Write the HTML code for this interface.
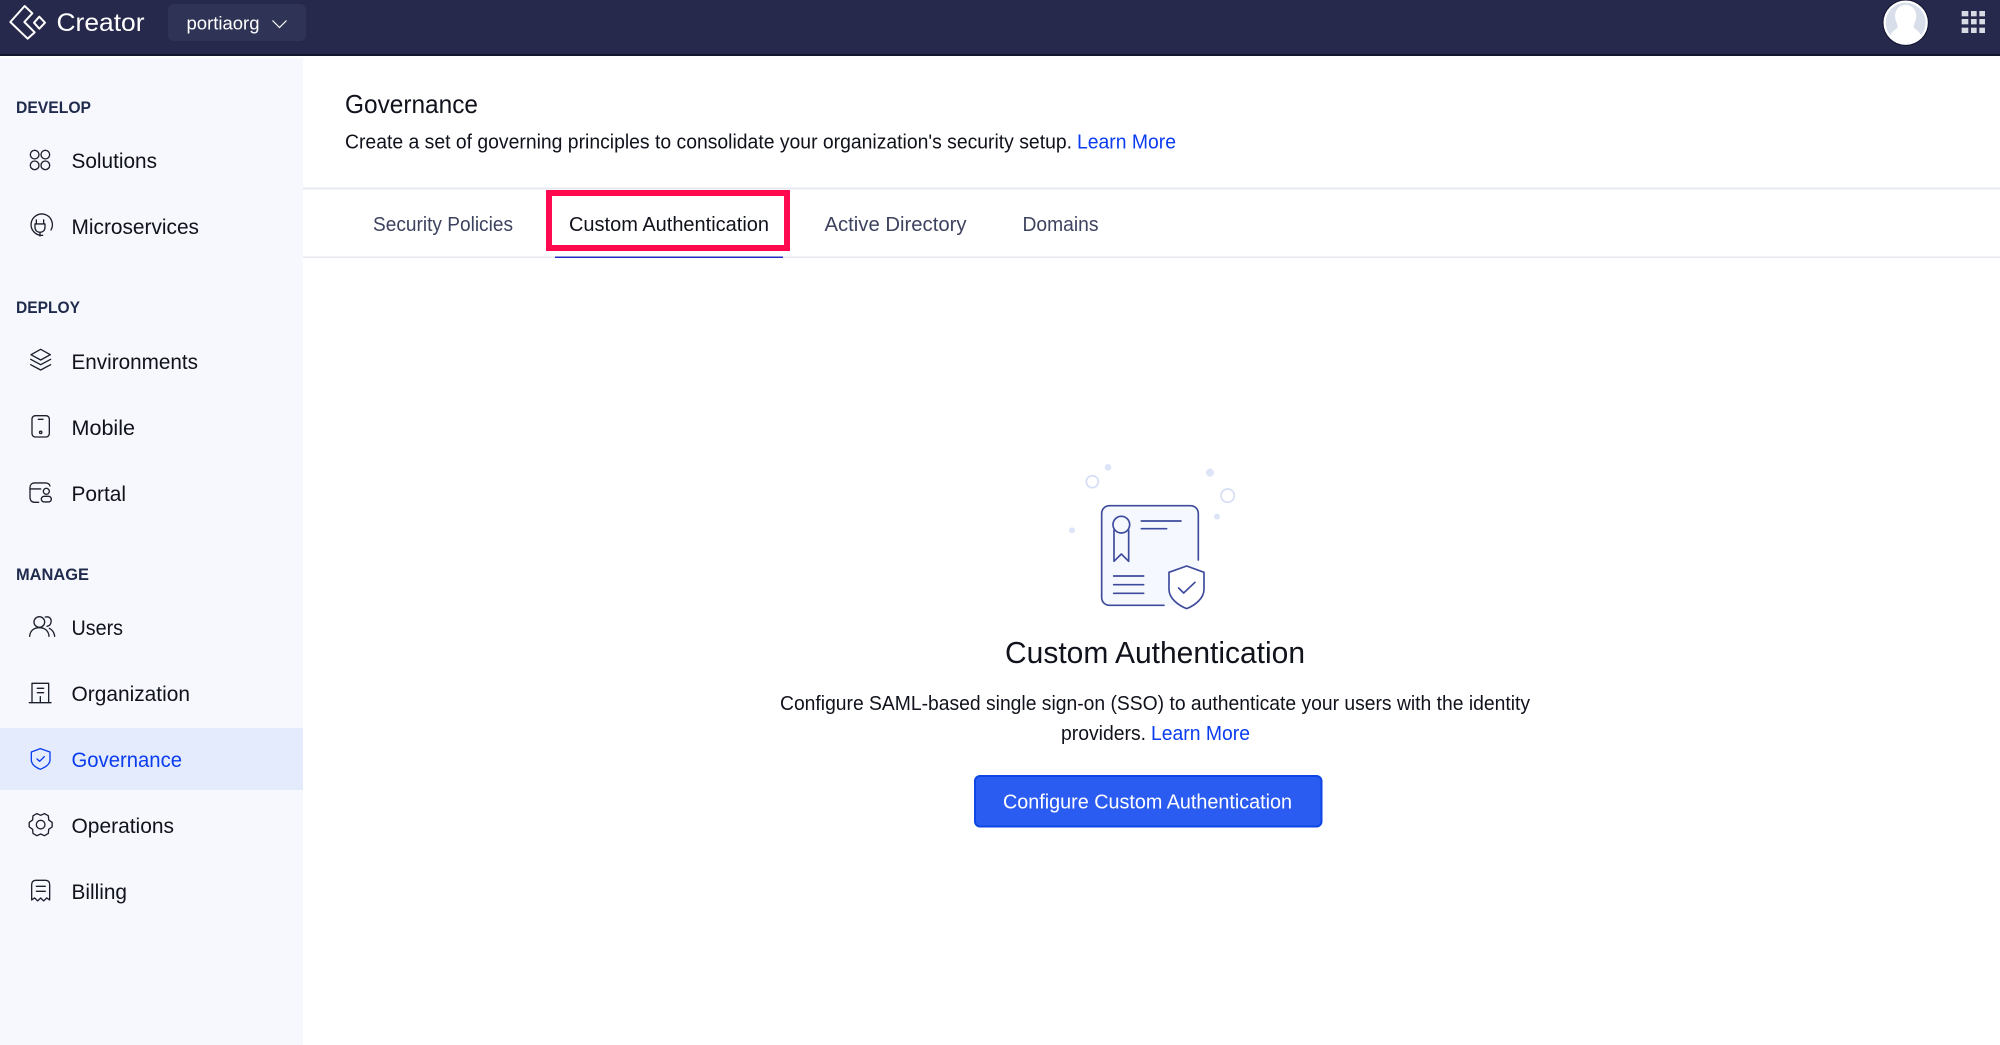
<!DOCTYPE html>
<html><head><meta charset="utf-8"><title>Governance</title>
<style>
html,body{margin:0;padding:0;background:#fff;width:2000px;height:1045px;overflow:hidden}
svg{display:block}
text{font-family:"Liberation Sans",sans-serif;fill:#10121c}
.n{font-size:21px}
.h{font-size:17px;fill:#1f2a4d;font-weight:bold}
.t{font-size:20px;fill:#3d425f}
.d{font-size:20px}
.l{fill:#0a3cf0}
.i{fill:none;stroke:#1c1f2c;stroke-width:4;stroke-linecap:round;stroke-linejoin:round}
</style></head><body>
<svg width="2000" height="1045" viewBox="0 0 2000 1045" xmlns="http://www.w3.org/2000/svg">
<rect x="0" y="0" width="2000" height="55" fill="#27294c"/>
<rect x="0" y="54" width="2000" height="2" fill="#14152e"/>
<rect x="0" y="58" width="303" height="987" fill="#f6f8fd"/>
<rect x="0" y="728" width="303" height="62" fill="#e4ebfc"/>
<rect x="303" y="187.500" width="1697" height="2" fill="#e6e9f2"/>
<rect x="303" y="256.500" width="1697" height="1.500" fill="#e6e9f2"/>

<!-- logo -->
<g transform="scale(.3333)" fill="none" stroke="#fff" stroke-width="6" stroke-linejoin="round" stroke-linecap="round">
<path d="M74 18 L31 66 L83 116 L104 97 L73 66 L97 40 Z"/>
<path d="M118 50 L135 68 L118 86 L102 68 Z"/>
</g>
<text x="56.500" y="31" font-size="25" style="fill:#fff" textLength="88" lengthAdjust="spacingAndGlyphs">Creator</text>
<rect x="168" y="4" width="138" height="37" rx="6" fill="#2f3356"/>
<text x="186.500" y="29.500" font-size="18" style="fill:#fff" textLength="73" lengthAdjust="spacingAndGlyphs">portiaorg</text>
<path d="M272.500 20.500 L279.500 27.500 L286.500 20.500" fill="none" stroke="#fff" stroke-width="1.200"/>

<!-- avatar -->
<g transform="translate(1860,0) scale(.3333)">
<circle cx="137" cy="68" r="68" fill="#fff" stroke="#111230" stroke-width="3"/>
<circle cx="137" cy="68" r="60" fill="#d9dfea"/>
<path d="M91 106 C96 94 104 91 112 84 C116 78 108 68 106 56 C102 30 118 15 137 15 C156 15 172 30 168 56 C166 68 158 78 162 84 C170 91 178 94 183 106 A60 60 0 0 1 91 106Z" fill="#fff"/>
<g fill="#d8dbe3">
<rect x="305" y="33" width="20" height="16"/><rect x="333" y="33" width="17" height="16"/><rect x="358" y="33" width="17" height="16"/>
<rect x="305" y="57" width="20" height="16"/><rect x="333" y="57" width="17" height="16"/><rect x="358" y="57" width="17" height="16"/>
<rect x="305" y="83" width="20" height="16"/><rect x="333" y="83" width="17" height="16"/><rect x="358" y="83" width="17" height="16"/>
</g></g>

<!-- sidebar text -->
<text class="h" x="16" y="113" textLength="75" lengthAdjust="spacingAndGlyphs">DEVELOP</text>
<text class="n" x="71.500" y="168" textLength="85.500" lengthAdjust="spacingAndGlyphs">Solutions</text>
<text class="n" x="71.500" y="234" textLength="127.500" lengthAdjust="spacingAndGlyphs">Microservices</text>
<text class="h" x="16" y="313" textLength="64" lengthAdjust="spacingAndGlyphs">DEPLOY</text>
<text class="n" x="71.500" y="369" textLength="126.500" lengthAdjust="spacingAndGlyphs">Environments</text>
<text class="n" x="71.500" y="435" textLength="63.500" lengthAdjust="spacingAndGlyphs">Mobile</text>
<text class="n" x="71.500" y="501" textLength="54.500" lengthAdjust="spacingAndGlyphs">Portal</text>
<text class="h" x="16" y="580" textLength="73" lengthAdjust="spacingAndGlyphs">MANAGE</text>
<text class="n" x="71.500" y="635" textLength="51.500" lengthAdjust="spacingAndGlyphs">Users</text>
<text class="n" x="71.500" y="701" textLength="118.500" lengthAdjust="spacingAndGlyphs">Organization</text>
<text class="n l" x="71.500" y="767" textLength="110.500" lengthAdjust="spacingAndGlyphs">Governance</text>
<text class="n" x="71.500" y="833" textLength="102.500" lengthAdjust="spacingAndGlyphs">Operations</text>
<text class="n" x="71.500" y="899" textLength="55.500" lengthAdjust="spacingAndGlyphs">Billing</text>

<!-- sidebar icons: zoom coordinates -->
<g transform="scale(.3333)" class="i">
<circle cx="104" cy="464" r="13"/><circle cx="136" cy="464" r="13"/><circle cx="104" cy="496" r="13"/><circle cx="136" cy="496" r="13"/>
<path d="M128 706 A32 32 0 1 1 153 690"/><path d="M109 660 V672 M131 660 V672 M105 672 H135 V682 C135 692 128 697 120 697 C112 697 105 692 105 682 Z M120 697 V708"/>
</g>
<g transform="translate(0,260) scale(.3333)" class="i">
<path d="M122 268 L151 284 L122 300 L93 284 Z"/><path d="M92 298 L122 314 L152 298"/><path d="M92 314 L122 330 L152 314"/>
<rect x="96" y="467" width="52" height="64" rx="10"/><path d="M115 478 H129"/><circle cx="122" cy="517" r="3.500"/>
<path d="M150 678 C148 671 142 669 136 669 H104 C95 669 90 675 90 683 V712 C90 721 95 727 104 727 H116"/><path d="M90 687 H122"/><circle cx="139" cy="694" r="9"/><rect x="124" y="709" width="30" height="17" rx="8.500"/>
</g>
<g transform="translate(0,560) scale(.3333)" class="i">
<circle cx="118" cy="186" r="16"/><path d="M89 229 C90 212 102 203 118 203 C134 203 146 212 147 229"/><path d="M136 171 C150 168 155 178 153 187 C152 194 147 198 141 199"/><path d="M148 205 C158 210 163 218 164 229"/>
<path d="M96 427 V370 H146 V427"/><path d="M88 428 H153"/><path d="M112 385 H131 M112 398 H131 M121 410 V427"/>
<path style="stroke:#0a3cf0" d="M121 566 L150 576 V600 C150 612 136 622 121 628 C106 622 94 612 94 600 V576 Z"/><path style="stroke:#0a3cf0" d="M111 597 L119 604 L133 590"/>
<path d="M133.400 760.900 L145 767.600 L146.200 780 L156.400 787.300 L156.400 800.700 L146.200 808 L145 820.400 L133.400 827.100 L122 822 L110.600 827.100 L99 820.400 L97.800 808 L87.600 800.700 L87.600 787.300 L97.800 780 L99 767.600 L110.600 760.900 L122 766 Z"/><circle cx="122" cy="794" r="13"/>
<path d="M95 975 C95 966 100 961 108 961 H137 C145 961 149 966 149 975 V1020 L140 1014 L131 1023 L122 1014 L113 1023 L104 1014 L95 1020 Z"/><path d="M109 979 H136 M109 994 H136"/>
</g>

<!-- page header -->
<text x="345" y="113" font-size="26" textLength="133" lengthAdjust="spacingAndGlyphs">Governance</text>
<text class="d" x="345" y="148.500" textLength="727" lengthAdjust="spacingAndGlyphs">Create a set of governing principles to consolidate your organization's security setup.</text>
<text class="d l" x="1077" y="148.500" textLength="99" lengthAdjust="spacingAndGlyphs">Learn More</text>

<!-- tabs -->
<text class="t" x="373" y="231" textLength="140" lengthAdjust="spacingAndGlyphs">Security Policies</text>
<text class="d" x="569" y="231" textLength="200" lengthAdjust="spacingAndGlyphs">Custom Authentication</text>
<text class="t" x="824.500" y="231" textLength="142" lengthAdjust="spacingAndGlyphs">Active Directory</text>
<text class="t" x="1022.500" y="231" textLength="76" lengthAdjust="spacingAndGlyphs">Domains</text>
<rect x="549" y="193" width="238" height="55" fill="none" stroke="#ff0a4e" stroke-width="6"/>
<rect x="555" y="256.500" width="228" height="1.500" fill="#1d2fc0"/>

<!-- illustration: zoom coordinates -->
<g transform="translate(1040,450) scale(.3333)">
<g fill="#dde4f8">
<circle cx="204" cy="52" r="10"/><circle cx="510" cy="68" r="12"/><circle cx="531" cy="200" r="9"/><circle cx="96" cy="241" r="9"/>
</g>
<circle cx="157" cy="95" r="18" fill="none" stroke="#d5def6" stroke-width="5"/>
<circle cx="563" cy="137" r="20" fill="none" stroke="#d5def6" stroke-width="5"/>
<rect x="185" y="167" width="290" height="299" rx="24" fill="#f5f8fe"/>
<g fill="none" stroke="#3e4b9c" stroke-width="5" stroke-linecap="round" stroke-linejoin="round">
<path d="M372 466 H209 C195 466 185 456 185 442 V191 C185 177 195 167 209 167 H451 C465 167 475 177 475 191 V330"/>
<path d="M222 240 V334 L244 312 L266 334 V240"/>
<circle cx="244" cy="224" r="25" fill="#f5f8fe"/>
<path d="M304 213 H423 M304 236 H380 M221 378 H311 M221 404 H311 M221 430 H311"/>
<path d="M440 348 L492 367 V418 C492 445 465 466 440 476 C415 466 387 445 387 418 V367 Z" fill="#fff"/>
<path d="M416 414 L431 429 L465 397"/>
</g></g>

<!-- empty state -->
<text x="1005" y="663" font-size="31" textLength="300" lengthAdjust="spacingAndGlyphs">Custom Authentication</text>
<text class="d" x="780" y="710" textLength="750" lengthAdjust="spacingAndGlyphs">Configure SAML-based single sign-on (SSO) to authenticate your users with the identity</text>
<text class="d" x="1061" y="740" textLength="85" lengthAdjust="spacingAndGlyphs">providers.</text>
<text class="d l" x="1151" y="740" textLength="99" lengthAdjust="spacingAndGlyphs">Learn More</text>
<rect x="975" y="776" width="346.500" height="50.500" rx="5" fill="#2b5cf2" stroke="#0f46e6" stroke-width="2"/>
<text x="1003" y="808.500" font-size="20" style="fill:#fff" textLength="289" lengthAdjust="spacingAndGlyphs">Configure Custom Authentication</text>
</svg>
</body></html>
